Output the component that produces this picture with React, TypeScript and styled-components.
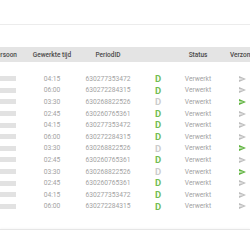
import React from "react";
import styled, { createGlobalStyle } from "styled-components";

const Global = createGlobalStyle`
  html, body { margin: 0; padding: 0; background: #fff; }
  body { font-family: Roboto, "Liberation Sans", sans-serif; overflow: hidden; width: 250px; height: 250px; }
`;

const Page = styled.div`
  width: 250px;
  height: 250px;
  overflow: hidden;
  display: flex;
  flex-direction: column;
`;

const TopBar = styled.div`
  height: 24px;
  border-bottom: 1px solid #ececec;
  flex: none;
`;

const Table = styled.div`
  margin-left: -22px;
  width: 300px;
  margin-top: 22px;
  display: flex;
  flex-direction: column;
`;

const cols = "49px 50px 62px 38px 42px 58px";

const HeaderRow = styled.div`
  display: grid;
  grid-template-columns: ${cols};
  height: 15px;
  align-items: center;
  background: #e4e4e4;
  font-size: 6.5px;
  font-weight: 500;
  color: #4a4a4a;
`;

const Body = styled.div`
  padding-top: 11px;
  display: flex;
  flex-direction: column;
`;

const Row = styled.div`
  display: grid;
  grid-template-columns: ${cols};
  height: 11.6px;
  align-items: center;
  font-size: 6.7px;
  color: #a3a3a3;
`;

const Cell = styled.div<{ $align?: "left" | "center" | "right"; $pad?: number }>`
  display: flex;
  align-items: center;
  justify-content: ${(p) =>
    p.$align === "left" ? "flex-start" : p.$align === "right" ? "flex-end" : "center"};
  padding-left: ${(p) => (p.$align === "left" ? p.$pad ?? 0 : 0)}px;
  padding-right: ${(p) => (p.$align === "right" ? p.$pad ?? 0 : 0)}px;
  white-space: nowrap;
  overflow: visible;
`;

const NameBar = styled.div`
  width: 40px;
  height: 5px;
  background: #e2e2e2;
`;

const Letter = styled.span<{ $on: boolean }>`
  font-size: 9.5px;
  font-weight: 700;
  color: ${(p) => (p.$on ? "#72bd52" : "#cccccc")};
  line-height: 1;
`;

const Footer = styled.div`
  margin-top: 17px;
  border-top: 1px solid #e6e6e6;
  box-shadow: 0 -1px 2px rgba(0, 0, 0, 0.03);
  flex: 1;
`;

const Send = ({ on }: { on: boolean }) => (
  <svg width="7" height="6" viewBox="2 3 21 18">
    <path d="M2.01 21L23 12 2.01 3 2 10l15 2-15 2z" fill={on ? "#5fb33e" : "#bdbdbd"} />
  </svg>
);

const rows: [string, string, boolean, boolean][] = [
  ["04:15", "630277353472", true, false],
  ["06:00", "630272284315", true, false],
  ["03:30", "630268822526", false, true],
  ["02:45", "630260765361", true, false],
  ["04:15", "630277353472", true, false],
  ["06:00", "630272284315", true, false],
  ["03:30", "630268822526", false, true],
  ["02:45", "630260765361", true, false],
  ["03:30", "630268822526", false, true],
  ["02:45", "630260765361", true, false],
  ["04:15", "630277353472", true, false],
  ["06:00", "630272284315", true, false],
];

export default function App() {
  return (
    <Page>
      <Global />
      <TopBar />
      <Table>
        <HeaderRow>
          <Cell $align="right" $pad={10}>Persoon</Cell>
          <Cell>Gewerkte tijd</Cell>
          <Cell>PeriodID</Cell>
          <Cell></Cell>
          <Cell>Status</Cell>
          <Cell $align="left" $pad={11}>Verzonden</Cell>
        </HeaderRow>
        <Body>
          {rows.map(([t, id, d, sent], i) => (
            <Row key={i}>
              <Cell $align="right" $pad={11}>
                <NameBar />
              </Cell>
              <Cell>{t}</Cell>
              <Cell>{id}</Cell>
              <Cell>
                <Letter $on={d}>D</Letter>
              </Cell>
              <Cell>Verwerkt</Cell>
              <Cell $align="left" $pad={20}>
                <Send on={sent} />
              </Cell>
            </Row>
          ))}
        </Body>
      </Table>
      <Footer />
    </Page>
  );
}
